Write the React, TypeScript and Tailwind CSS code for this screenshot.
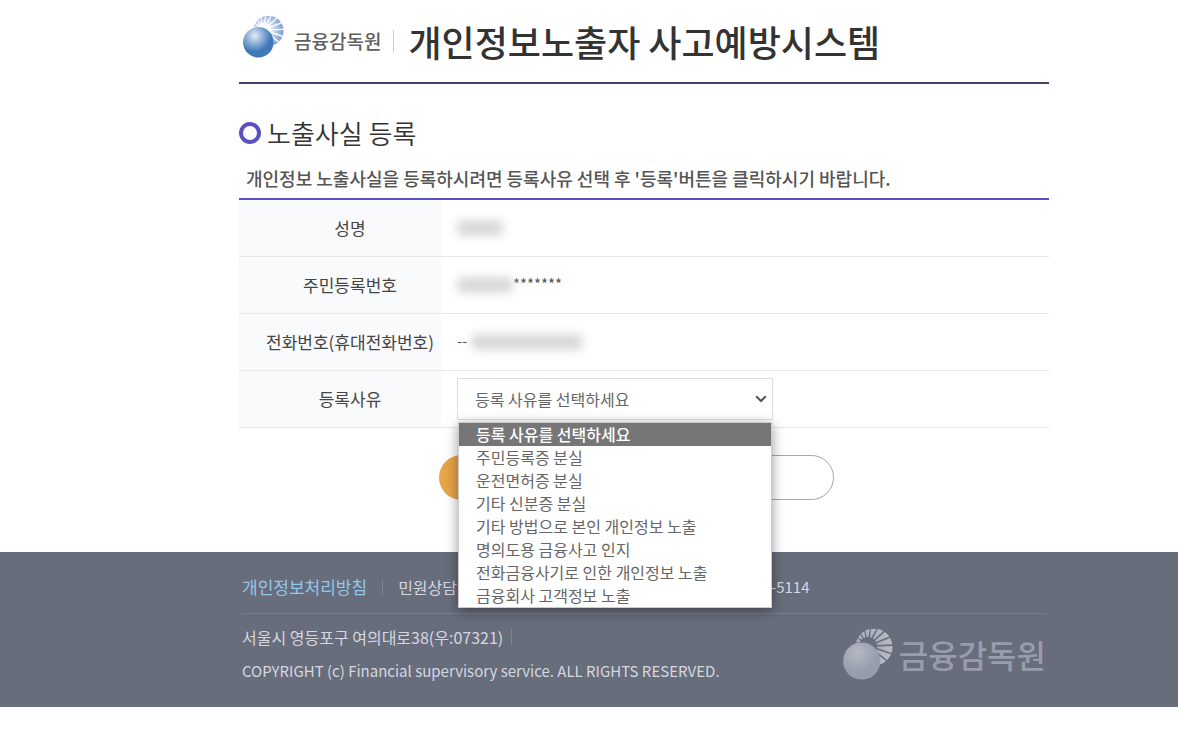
import React, { useState } from 'react';

const reasons = [
  '등록 사유를 선택하세요',
  '주민등록증 분실',
  '운전면허증 분실',
  '기타 신분증 분실',
  '기타 방법으로 본인 개인정보 노출',
  '명의도용 금융사고 인지',
  '전화금융사기로 인한 개인정보 노출',
  '금융회사 고객정보 노출',
];

// one ray between the inner ring around (25,17) and the outer circle around (31,18)
function ray(deg: number) {
  const pt = (a: number, outer: boolean) => {
    const t = (a * Math.PI) / 180;
    const dx = Math.cos(t);
    const dy = Math.sin(t);
    if (!outer) return `${25 + dx * 9},${17 + dy * 9}`;
    const b = -6 * dx - dy;
    const d = -b + Math.sqrt(b * b - (37 - 18.5 * 18.5));
    return `${25 + dx * d},${17 + dy * d}`;
  };
  return [pt(deg - 5, false), pt(deg - 8, true), pt(deg, true), pt(deg + 8, true), pt(deg + 5, false)].join(' ');
}

const rays = [-172, -152, -132, -112, -92, -72, -52, -32, -12, 8, 28, 48];

type EmblemProps = {
  id: string;
  className: string;
  light: string;
  dark: string;
  rayInner: string;
  rayOuter: string;
};

function Emblem({ id, className, light, dark, rayInner, rayOuter }: EmblemProps) {
  return (
    <svg viewBox="0 0 50 51" className={className} aria-hidden="true">
      <defs>
        <radialGradient id={id} cx="0.38" cy="0.28" r="0.7">
          <stop offset="0" stopColor={light} />
          <stop offset="0.75" stopColor={dark} />
          <stop offset="1" stopColor={dark} />
        </radialGradient>
        <radialGradient id={id + '-ray'} gradientUnits="userSpaceOnUse" cx="27" cy="17" r="22">
          <stop offset="0.35" stopColor={rayInner} />
          <stop offset="1" stopColor={rayOuter} />
        </radialGradient>
      </defs>
      {rays.map((deg) => (
        <polygon key={deg} points={ray(deg)} fill={`url(#${id}-ray)`} />
      ))}
      <circle cx="18.7" cy="32" r="18.6" fill={`url(#${id})`} />
    </svg>
  );
}

function Header() {
  return (
    <header className="flex h-[84px] items-center border-b-2 border-[#45436a]">
      <a href="#" className="flex items-center">
        <Emblem
          id="emblem-top"
          className="mb-2 ml-1 h-[42px] w-[41px]"
          light="#e4ebf6"
          dark="#4079ba"
          rayInner="#dfe8f5"
          rayOuter="#7f9fd2"
        />
        <span className="ml-[10px] text-[19px] leading-6 font-medium text-[#606060]">금융감독원</span>
      </a>
      <span className="ml-3 h-[22px] w-px bg-[#cccccc]"></span>
      <h1 className="ml-[14px] text-4xl font-medium text-[#333333]">개인정보노출자 사고예방시스템</h1>
    </header>
  );
}

function ReasonSelect() {
  const [reason, setReason] = useState(reasons[0]);

  return (
    <div className="relative w-[316px]">
      <select
        id="reason"
        value={reason}
        onChange={(e) => setReason(e.target.value)}
        className="block h-[42px] w-full appearance-none border border-[#dddddd] bg-white px-[17px] text-base text-[#666666]"
      >
        {reasons.map((item) => (
          <option key={item}>{item}</option>
        ))}
      </select>
      <svg viewBox="0 0 12 8" className="pointer-events-none absolute top-[17px] right-[6px] h-2 w-3" fill="none" stroke="#555555" strokeWidth="2">
        <path d="M1.2 1.2 L6 6 L10.8 1.2" />
      </svg>
      <ul className="absolute top-[44px] left-px z-10 w-[314px] border border-[#cccccc] bg-white shadow-[0_3px_12px_rgba(0,0,0,0.4)]">
        {reasons.map((item) => (
          <li key={item}>
            <button
              type="button"
              onClick={() => setReason(item)}
              className={
                item === reason
                  ? 'block w-full bg-[#767676] px-[17px] text-left text-base leading-[23px] font-medium text-white'
                  : 'block w-full px-[17px] text-left text-base leading-[23px] text-[#666666]'
              }
            >
              {item}
            </button>
          </li>
        ))}
      </ul>
    </div>
  );
}

function InfoTable() {
  const th = 'w-[202px] bg-[#f9fafc] pl-5 text-center text-[17px] font-normal text-[#444444]';
  const td = 'pl-4 text-[15px] text-[#555555]';

  return (
    <table className="mt-[6px] w-full border-t-2 border-[#5a51c4]">
      <tbody>
        <tr className="h-[57px] border-b border-[#e6e6e6]">
          <th scope="row" className={th}>성명</th>
          <td className={td}>
            <div className="h-4 w-[46px] rounded-md bg-[#d8d8d8] blur-[5px]"></div>
          </td>
        </tr>
        <tr className="h-[57px] border-b border-[#e6e6e6]">
          <th scope="row" className={th}>주민등록번호</th>
          <td className={td}>
            <div className="flex items-center">
              <div className="h-4 w-14 rounded-md bg-[#d8d8d8] blur-[5px]"></div>
              <span>*******</span>
            </div>
          </td>
        </tr>
        <tr className="h-[57px] border-b border-[#e6e6e6]">
          <th scope="row" className={th}>전화번호(휴대전화번호)</th>
          <td className={td}>
            <div className="flex items-center">
              <span>--</span>
              <div className="ml-1 h-4 w-28 rounded-md bg-[#d8d8d8] blur-[5px]"></div>
            </div>
          </td>
        </tr>
        <tr className="h-[57px] border-b border-[#e6e6e6]">
          <th scope="row" className={th}>
            <label htmlFor="reason">등록사유</label>
          </th>
          <td className={td}>
            <ReasonSelect />
          </td>
        </tr>
      </tbody>
    </table>
  );
}

function Footer() {
  return (
    <footer className="mt-[52px] h-[155px] bg-[#686d7b] pl-[110px] text-base text-[#d5d7e0]">
      <div className="mx-auto max-w-[810px] px-[3px]">
        <div className="flex h-[62px] items-center border-b border-[#7a7d8b] pt-[10px]">
          <a href="#" className="text-[17px] text-[#94c7ec]">개인정보처리방침</a>
          <span className="mx-[15px] h-4 w-px bg-[#7f8391]"></span>
          <span>민원상담</span>
          <span className="ml-[314px] text-[15px]">-5114</span>
        </div>
        <div className="flex justify-between">
          <div className="pt-[7px] leading-[33px]">
            <p className="flex items-center">
              서울시 영등포구 여의대로38(우:07321)
              <span className="ml-2 h-4 w-px bg-[#7f8391]"></span>
            </p>
            <p className="text-[15px] leading-[33px]">COPYRIGHT (c) Financial supervisory service. ALL RIGHTS RESERVED.</p>
          </div>
          <div className="flex items-center pt-2">
            <Emblem
              id="emblem-bottom"
              className="h-[51px] w-[50px]"
              light="#b6b9c4"
              dark="#979dad"
              rayInner="#a9adb9"
              rayOuter="#b8bbc5"
            />
            <span className="ml-[6px] text-[32px] leading-10 font-medium text-[#989cab]">금융감독원</span>
          </div>
        </div>
      </div>
    </footer>
  );
}

export default function App() {
  return (
    <div className="bg-white font-['Noto_Sans_CJK_KR','Noto_Sans',sans-serif]">
      <div className="pl-[110px]">
        <main className="mx-auto max-w-[810px]">
          <Header />
          <h2 className="mt-[29px] flex items-center gap-[6px] text-[26px] leading-10 font-[350] text-[#333333]">
            <span className="size-[22px] rounded-full border-4 border-[#5a50c0]"></span>
            노출사실 등록
          </h2>
          <p className="mt-[11px] pl-[7px] text-lg font-medium text-[#555555]">
            개인정보 노출사실을 등록하시려면 등록사유 선택 후 '등록'버튼을 클릭하시기 바랍니다.
          </p>
          <InfoTable />
          <div className="mt-[27px] flex justify-center gap-[15px] pr-[15px]">
            <button type="button" aria-label="등록" className="h-[45px] w-[190px] rounded-full bg-[#e6a548]"></button>
            <button type="button" aria-label="취소" className="h-[45px] w-[190px] rounded-full border border-[#a5a5ad] bg-white"></button>
          </div>
        </main>
      </div>
      <Footer />
    </div>
  );
}
